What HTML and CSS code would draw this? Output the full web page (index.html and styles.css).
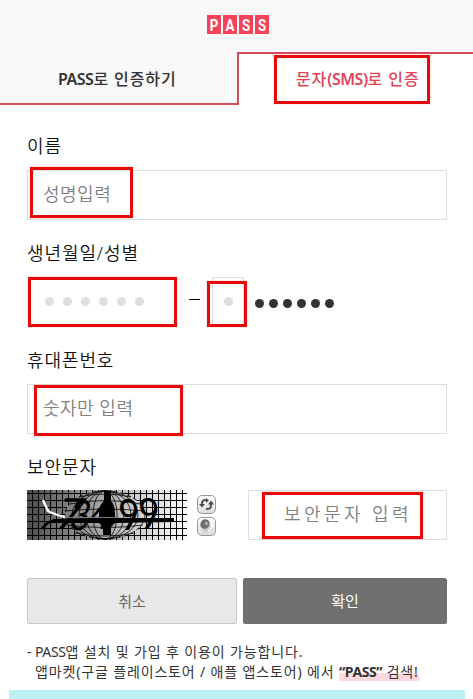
FILE: index.html
```html
<!doctype html>
<html lang="ko">
  <head>
    <meta charset="UTF-8" />
    <meta name="viewport" content="width=device-width, initial-scale=1.0" />
    <title>PASS 본인인증</title>
    <link rel="stylesheet" href="styles.css">
  </head>
  <body>
    <header class="header">
      <svg class="logo" width="62" height="19" viewBox="0 0 62 19">
        <path d="M0 0H14V19H0ZM16 0H30V19H16ZM32 0H46V19H32ZM48 0H62V19H48Z" fill="#f5435a" />
        <g class="logo-text">
          <text transform="translate(7 15.500) scale(.78 1)">P</text>
          <text transform="translate(23 15.500) scale(.78 1)">A</text>
          <text transform="translate(39 15.500) scale(.78 1)">S</text>
          <text transform="translate(55 15.500) scale(.78 1)">S</text>
        </g>
      </svg>
    </header>

    <nav class="tabs">
      <a class="tab"><span class="tab-text"><span class="latin">PASS</span>로 인증하기</span></a>
      <a class="tab active"><span class="tab-text">문자<span class="latin">(SMS)</span>로 인증</span><i class="mark mark-sms"></i></a>
    </nav>

    <main class="form">
      <section class="group">
        <div class="label"><span>이름</span></div>
        <div class="field"><span class="hint">성명입력</span><i class="mark mark-name"></i></div>
      </section>

      <section class="group">
        <div class="label"><span>생년월일/성별</span></div>
        <div class="birth">
          <div class="birth-date">
            <b class="dot"></b><b class="dot"></b><b class="dot"></b><b class="dot"></b><b class="dot"></b><b class="dot"></b>
            <i class="mark mark-birth"></i>
          </div>
          <span class="dash"></span>
          <div class="gender"><b class="dot"></b><i class="mark mark-gender"></i></div>
          <div class="masked">
            <b class="dot"></b><b class="dot"></b><b class="dot"></b><b class="dot"></b><b class="dot"></b><b class="dot"></b>
          </div>
        </div>
      </section>

      <section class="group">
        <div class="label"><span>휴대폰번호</span></div>
        <div class="field"><span class="hint">숫자만 입력</span><i class="mark mark-phone"></i></div>
      </section>

      <section class="group">
        <div class="label label-captcha"><span>보안문자</span></div>
        <div class="captcha">
          <svg class="captcha-img" width="160" height="50" viewBox="0 0 160 50">
            <defs>
              <linearGradient id="shade" gradientUnits="userSpaceOnUse" x1="0" y1="0" x2="160" y2="0">
                <stop offset="0" stop-color="#4c4c4c" />
                <stop offset=".35" stop-color="#929292" />
                <stop offset=".7" stop-color="#d0d0d0" />
                <stop offset="1" stop-color="#fafafa" />
              </linearGradient>
              <pattern id="grid" width="6" height="7" patternUnits="userSpaceOnUse">
                <path d="M5.500 0V7M0 3.500H6" stroke="#000" fill="none" />
              </pattern>
            </defs>
            <rect width="160" height="50" fill="url(#shade)" />
            <rect width="160" height="50" fill="url(#grid)" />
            <!-- bulged part of the grid -->
            <ellipse cx="78" cy="25" rx="40" ry="24" fill="url(#shade)" />
            <g fill="none" stroke="#000" stroke-width=".8">
              <ellipse cx="78" cy="25" rx="40" ry="24" stroke-dasharray="4 3" />
              <ellipse cx="78" cy="25" rx="33" ry="24" />
              <ellipse cx="78" cy="25" rx="26" ry="24" />
              <ellipse cx="78" cy="25" rx="19" ry="24" />
              <ellipse cx="78" cy="25" rx="12" ry="24" />
              <path d="M52 7Q78 1 104 7M43 14Q78 7 113 14M38 21Q78 17 118 21M40 35Q78 40 116 35M48 43Q78 49 108 43" />
            </g>
            <g class="captcha-chars">
              <text transform="translate(27 38) skewX(-16) scale(1.4 1.3)">7</text>
              <text transform="translate(41 40) skewX(-10) scale(1.1 1.3)">3</text>
              <text transform="translate(60 39) skewX(-12) scale(1.15 1.3)">4</text>
              <text transform="translate(93 40) skewX(5) scale(1.15 1.35)">9</text>
              <text transform="translate(113 38) skewX(5) scale(1.15 1.3)">9</text>
            </g>
            <!-- plane silhouette -->
            <path d="M77 1H84V11Q88 14 88 25V33L84 37V45H76V37L72 33V25Q72 14 77 11Z" />
            <path d="M14 38Q19 31 27 29L61 28H147V32L88 33H35L23 33Q19 35 17 40Z" />
            <path d="M16 10L21 21Q26 24 38 27" fill="none" stroke="#fff" stroke-width="2.500" />
            <path d="M38 27.500H92" stroke="#777" />
          </svg>
          <div class="tools">
            <span class="tool">
              <svg width="17" height="17" viewBox="0 0 17 17">
                <path d="M4 9V7.500Q4 4 7.500 4H9M13 8V9.500Q13 13 9.500 13H8" fill="none" stroke="#555" stroke-width="2" />
                <path d="M1 8H7L4 11.500ZM10 8.500H16L13 4.500ZM8 2L11 4.500L8 7Z" fill="#4c4c4c" />
              </svg>
            </span>
            <span class="tool">
              <svg width="17" height="17" viewBox="0 0 17 17">
                <path d="M2 8L6 15L15 12L13 7Z" fill="#ccc" />
                <ellipse cx="7" cy="6" rx="4.500" ry="5" fill="#6d6d6d" transform="rotate(35 7 6)" />
                <circle cx="8.500" cy="5.500" r="1.800" fill="#aaa" />
                <path d="M14 7Q14 11 10 13" fill="none" stroke="#fff" stroke-width="1.500" />
              </svg>
            </span>
          </div>
          <div class="field captcha-field"><span class="hint hint-captcha">보안문자 입력</span><i class="mark mark-captcha"></i></div>
        </div>
      </section>

      <div class="buttons">
        <button class="btn cancel">취소</button>
        <button class="btn confirm">확인</button>
      </div>

      <div class="notice">
        <span class="notice-dash">-</span>
        <div>
          <p class="line-one"><span class="latin">PASS</span>앱 설치 및 가입 후 이용이 가능합니다.</p>
          <p class="line-two">앱마켓(구글 플레이스토어 / 애플 앱스토어) 에서 <span class="search"><strong class="latin">“PASS”</strong> 검색!</span></p>
        </div>
      </div>
    </main>

    <div class="bottom-bar"></div>
  </body>
</html>
```

FILE: styles.css
```css
* {
  box-sizing: border-box;
}

body {
  margin: 0;
  height: 699px;
  display: flex;
  flex-direction: column;
  overflow: hidden;
  background: #fff;
  color: #222;
  font-family: "Noto Sans", "Noto Sans CJK KR", sans-serif;
}

.header {
  display: flex;
  justify-content: center;
  height: 52px;
  padding: 15px 0 0 3px;
  background: #f8f8f8;
}

.logo {
  overflow: visible;
}

.logo-text {
  fill: #fff;
  font: bold 17px "Roboto", sans-serif;
  text-anchor: middle;
}

.tabs {
  display: flex;
  height: 53px;
}

.tab {
  position: relative;
  width: 237px;
  padding-left: 58px;
  border-bottom: 2px solid #d24d60;
  background: #f8f8f8;
  color: #333;
  font-size: 16px;
  font-weight: 500;
  line-height: 54px;
  white-space: nowrap;
}

.tab.active {
  flex: 1;
  padding-left: 57px;
  border: solid #d24d60;
  border-width: 2px 0 0 2px;
  background: #fff;
  color: #e0445a;
  line-height: 50px;
}

.tab-text {
  letter-spacing: 0.9px;
}

.tab .latin {
  font-weight: 600;
  letter-spacing: -0.5px;
}

.form {
  height: 585px;
  padding: 26px 26px 0 27px;
}

.group {
  margin-bottom: 18px;
}

.label {
  height: 39px;
  color: #111;
  font-size: 18px;
  font-weight: 350;
  line-height: 30px;
  letter-spacing: 0.9px;
}

.label-captcha {
  height: 38px;
}

.field {
  position: relative;
  display: flex;
  align-items: center;
  height: 50px;
  padding: 0 0 4px 15px;
  border: 1px solid #ddd;
  color: #808080;
}

.hint {
  font-size: 18px;
  font-weight: 350;
  letter-spacing: 0.5px;
  white-space: nowrap;
}

.birth {
  display: flex;
  height: 50px;
}

.birth-date {
  position: relative;
  display: flex;
  align-items: center;
  gap: 9px;
  width: 162px;
  padding: 0 0 2px 18px;
}

.dot {
  width: 9px;
  height: 9px;
  border-radius: 50%;
  background: #dfdfdf;
}

.dash {
  width: 11px;
  height: 1px;
  margin-top: 22px;
  background: #000;
}

.gender {
  position: relative;
  display: flex;
  align-items: center;
  justify-content: center;
  width: 32px;
  margin-left: 12px;
  padding-bottom: 2px;
  border: 1px solid #ddd;
}

.masked {
  display: flex;
  align-items: center;
  gap: 5px;
  margin-left: 11px;
  padding-top: 3px;
}

.masked .dot {
  background: #333;
}

.captcha {
  display: flex;
  height: 50px;
}

.captcha-img {
  overflow: visible;
}

.captcha-chars {
  font: 32px "Lato", sans-serif;
}

.tools {
  display: flex;
  flex-direction: column;
  gap: 3px;
  margin-left: 10px;
  padding-top: 5px;
}

.tool {
  width: 19px;
  height: 19px;
  border: 1px solid #999;
  border-radius: 5px;
  background: linear-gradient(#fff, #ddd);
}

.tool svg {
  display: block;
}

.captcha-field {
  width: 199px;
  margin-left: 32px;
  padding-left: 35px;
}

.hint-captcha {
  letter-spacing: 3.4px;
}

.buttons {
  display: flex;
  gap: 6px;
  margin-top: 38px;
}

.btn {
  width: 210px;
  height: 46px;
  padding: 0 0 2px;
  border: 1px solid #c8c8c8;
  border-radius: 2px;
  background: #e8e8e8;
  color: #666;
  font: 15px "Noto Sans", "Noto Sans CJK KR", sans-serif;
}

.btn.confirm {
  width: 204px;
  border-color: #707070;
  background: #707070;
  color: #fff;
}

.notice {
  display: flex;
  margin-top: 18px;
  color: #333;
  font-size: 14px;
  line-height: 20px;
  white-space: nowrap;
}

.notice-dash {
  width: 8px;
}

.notice p {
  margin: 0;
}

.line-one {
  letter-spacing: 0.87px;
}

.line-two {
  letter-spacing: 0.85px;
}

.notice .latin {
  letter-spacing: -0.4px;
}

.search {
  background: linear-gradient(transparent 60%, #ffd9dd 60%);
}

.bottom-bar {
  height: 9px;
  margin: 0 8px 0 9px;
  background: #bbf0f5;
}

/* Red boxes drawn over the places to fill in */
.mark {
  position: absolute;
  border: 3px solid #e60a0a;
  box-shadow: 0 0 1px rgba(255, 0, 0, 0.5);
}

.mark-sms {
  left: 35px;
  top: 1px;
  width: 156px;
  height: 49px;
}

.mark-name {
  left: 2px;
  top: -4px;
  width: 103px;
  height: 51px;
}

.mark-birth {
  left: 1px;
  top: 0;
  width: 149px;
  height: 50px;
}

.mark-gender {
  left: -6px;
  top: 3px;
  width: 40px;
  height: 46px;
}

.mark-phone {
  left: 6px;
  top: 0;
  width: 149px;
  height: 51px;
}

.mark-captcha {
  left: 13px;
  top: 1px;
  width: 161px;
  height: 47px;
}
```
